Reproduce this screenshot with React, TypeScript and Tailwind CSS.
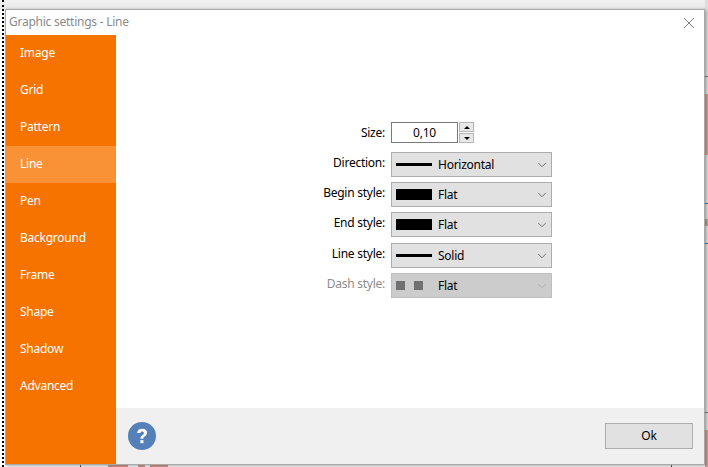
import React from "react";
import { ChevronDown } from "lucide-react";

const menuItems = ["Image", "Grid", "Pattern", "Line", "Pen", "Background", "Frame", "Shape", "Shadow", "Advanced"];

type Swatch = "line" | "block" | "dash";

const rows: { label: string; value: string; swatch: Swatch; rowClass: string; disabled?: boolean }[] = [
  { label: "Direction:", value: "Horizontal", swatch: "line", rowClass: "mt-[9px]" },
  { label: "Begin style:", value: "Flat", swatch: "block", rowClass: "mt-[5px]" },
  { label: "End style:", value: "Flat", swatch: "block", rowClass: "mt-[5px]" },
  { label: "Line style:", value: "Solid", swatch: "line", rowClass: "mt-[6px]" },
  { label: "Dash style:", value: "Flat", swatch: "dash", rowClass: "mt-[5px]", disabled: true },
];

const SwatchIcon = ({ type }: { type: Swatch }) => {
  if (type === "line") {
    return <div className="h-[3px] w-[36px] bg-black" />;
  }
  if (type === "block") {
    return <div className="h-[11px] w-[36px] bg-black" />;
  }
  return (
    <div className="flex w-[36px] gap-[9px]">
      <div className="h-[9px] w-[9px] bg-[#707070]" />
      <div className="h-[9px] w-[9px] bg-[#707070]" />
    </div>
  );
};

const Backdrop = () => (
  <div className="absolute inset-0 overflow-hidden bg-white">
    <div className="h-[9px] w-full bg-gradient-to-b from-[#f2f2f2] to-[#e6e6e6]" />
    <div className="absolute left-[2px] top-0 h-full border-l-2 border-dotted border-black" />
    <div className="absolute bottom-0 left-[705px] h-full w-[3px] bg-[#dcdcdc]" />
    <div className="absolute left-[705px] top-[94px] h-[61px] w-[3px] bg-[#d59a8a]" />
    <div className="absolute left-[705px] top-[430px] h-[37px] w-[3px] bg-[#d59a8a]" />
    <div className="absolute left-[705px] top-[76px] h-px w-[3px] bg-[#777777]" />
    <div className="absolute left-[705px] top-[203px] h-px w-[3px] bg-[#4a6f96]" />
    <div className="absolute left-[705px] top-[219px] h-[7px] w-[3px] bg-[#a8a595]" />
    <div className="absolute left-[705px] top-[243px] h-px w-[3px] bg-[#4a6f96]" />
    <div className="absolute left-[705px] top-[412px] h-px w-[3px] bg-[#777777]" />
    <div className="absolute left-[80px] top-[464px] h-[3px] w-px bg-[#555555]" />
    <div className="absolute left-[671px] top-[464px] h-[3px] w-px bg-[#555555]" />
    <div className="absolute left-[108px] top-[465px] h-[2px] w-[20px] bg-[#d59a8a]" />
    <div className="absolute left-[138px] top-[465px] h-[2px] w-[7px] bg-[#d59a8a]" />
    <div className="absolute left-[150px] top-[465px] h-[2px] w-[18px] bg-[#d59a8a]" />
  </div>
);

export default function App() {
  return (
    <div className="relative h-[467px] w-[708px] overflow-hidden pl-[5px] pt-[9px] font-['Noto_Sans',sans-serif] text-[12px] tracking-[-0.25px] text-black">
      <Backdrop />
      <div className="relative flex h-[456px] w-[700px] flex-col border border-[#a9a9a9] bg-white shadow-[1px_1px_3px_rgba(0,0,0,0.35)]">
        <div className="flex h-[25px] shrink-0 items-center justify-between pl-[3px] pr-[9px]">
          <span className="pb-px text-[#8a8a8a]">Graphic settings - Line</span>
          <svg width="12" height="12" viewBox="0 0 12 12" className="text-[#808080]">
            <path d="M1 1L11 11M11 1L1 11" stroke="currentColor" strokeWidth="1" fill="none" />
          </svg>
        </div>
        <div className="flex min-h-0 flex-1">
          <div className="flex w-[110px] shrink-0 flex-col bg-[#f77300] text-white">
            {menuItems.map((item) => (
              <div
                key={item}
                className={`flex h-[37px] items-center pb-[2px] pl-[14px] ${item === "Line" ? "bg-[#f99236]" : ""}`}
              >
                {item}
              </div>
            ))}
          </div>
          <div className="flex min-w-0 flex-1 flex-col">
            <div className="flex-1 pl-[209px] pt-[87px]">
              <div className="flex h-[21px] items-center">
                <div className="w-[60px] pl-[1px] text-right">Size:</div>
                <div className="ml-[6px] flex h-[21px] w-[67px] items-center justify-center border border-[#7a7a7a]">0,10</div>
                <div className="ml-px flex w-[15px] flex-col gap-px">
                  <div className="flex h-[10px] items-center justify-center border border-[#b5b5b5] bg-[#e8e8e8]">
                    <div className="border-x-[3px] border-b-[3px] border-x-transparent border-b-black" />
                  </div>
                  <div className="flex h-[10px] items-center justify-center border border-[#b5b5b5] bg-[#e8e8e8]">
                    <div className="border-x-[3px] border-t-[3px] border-x-transparent border-t-black" />
                  </div>
                </div>
              </div>
              {rows.map((row) => (
                <div key={row.label} className={`flex h-[25px] items-center ${row.rowClass}`}>
                  <div className={`-ml-[10px] w-[70px] whitespace-nowrap pb-[4px] text-right ${row.disabled ? "text-[#8c8c8c]" : ""}`}>
                    {row.label}
                  </div>
                  <div
                    className={`ml-[6px] flex h-[25px] w-[161px] items-center border pl-[4px] pr-px ${
                      row.disabled ? "border-[#bfbfbf] bg-[#cccccc]" : "border-[#adadad] bg-[#e1e1e1]"
                    }`}
                  >
                    <SwatchIcon type={row.swatch} />
                    <span className="ml-[6px] flex-1">{row.value}</span>
                    <ChevronDown size={14} strokeWidth={1.2} className={`mr-[1px] ${row.disabled ? "text-[#a8a8a8]" : "text-[#404040]"}`} />
                  </div>
                </div>
              ))}
            </div>
            <div className="flex h-[56px] shrink-0 items-center justify-between bg-[#f0f0f0] pl-[12px] pr-[11px]">
              <svg width="28" height="28" viewBox="0 0 29 29">
                <circle cx="14.5" cy="14.5" r="14.5" fill="#5580b8" />
                <path
                  d="M9.5 11.5C9.5 8.5 11.8 7 14.7 7C17.6 7 19.8 8.6 19.8 11.2C19.8 13 18.8 14 17.3 15C16.2 15.7 15.9 16.2 15.9 17.3H12.9C12.9 15.5 13.4 14.6 14.9 13.6C16 12.9 16.5 12.4 16.5 11.4C16.5 10.4 15.8 9.8 14.7 9.8C13.5 9.8 12.8 10.5 12.7 11.5Z"
                  fill="white"
                />
                <rect x="12.8" y="18.8" width="3.2" height="3.2" fill="white" />
              </svg>
              <button className="h-[26px] w-[88px] border border-[#adadad] bg-[#e1e1e1] text-[12px] text-black">Ok</button>
            </div>
          </div>
        </div>
      </div>
    </div>
  );
}
